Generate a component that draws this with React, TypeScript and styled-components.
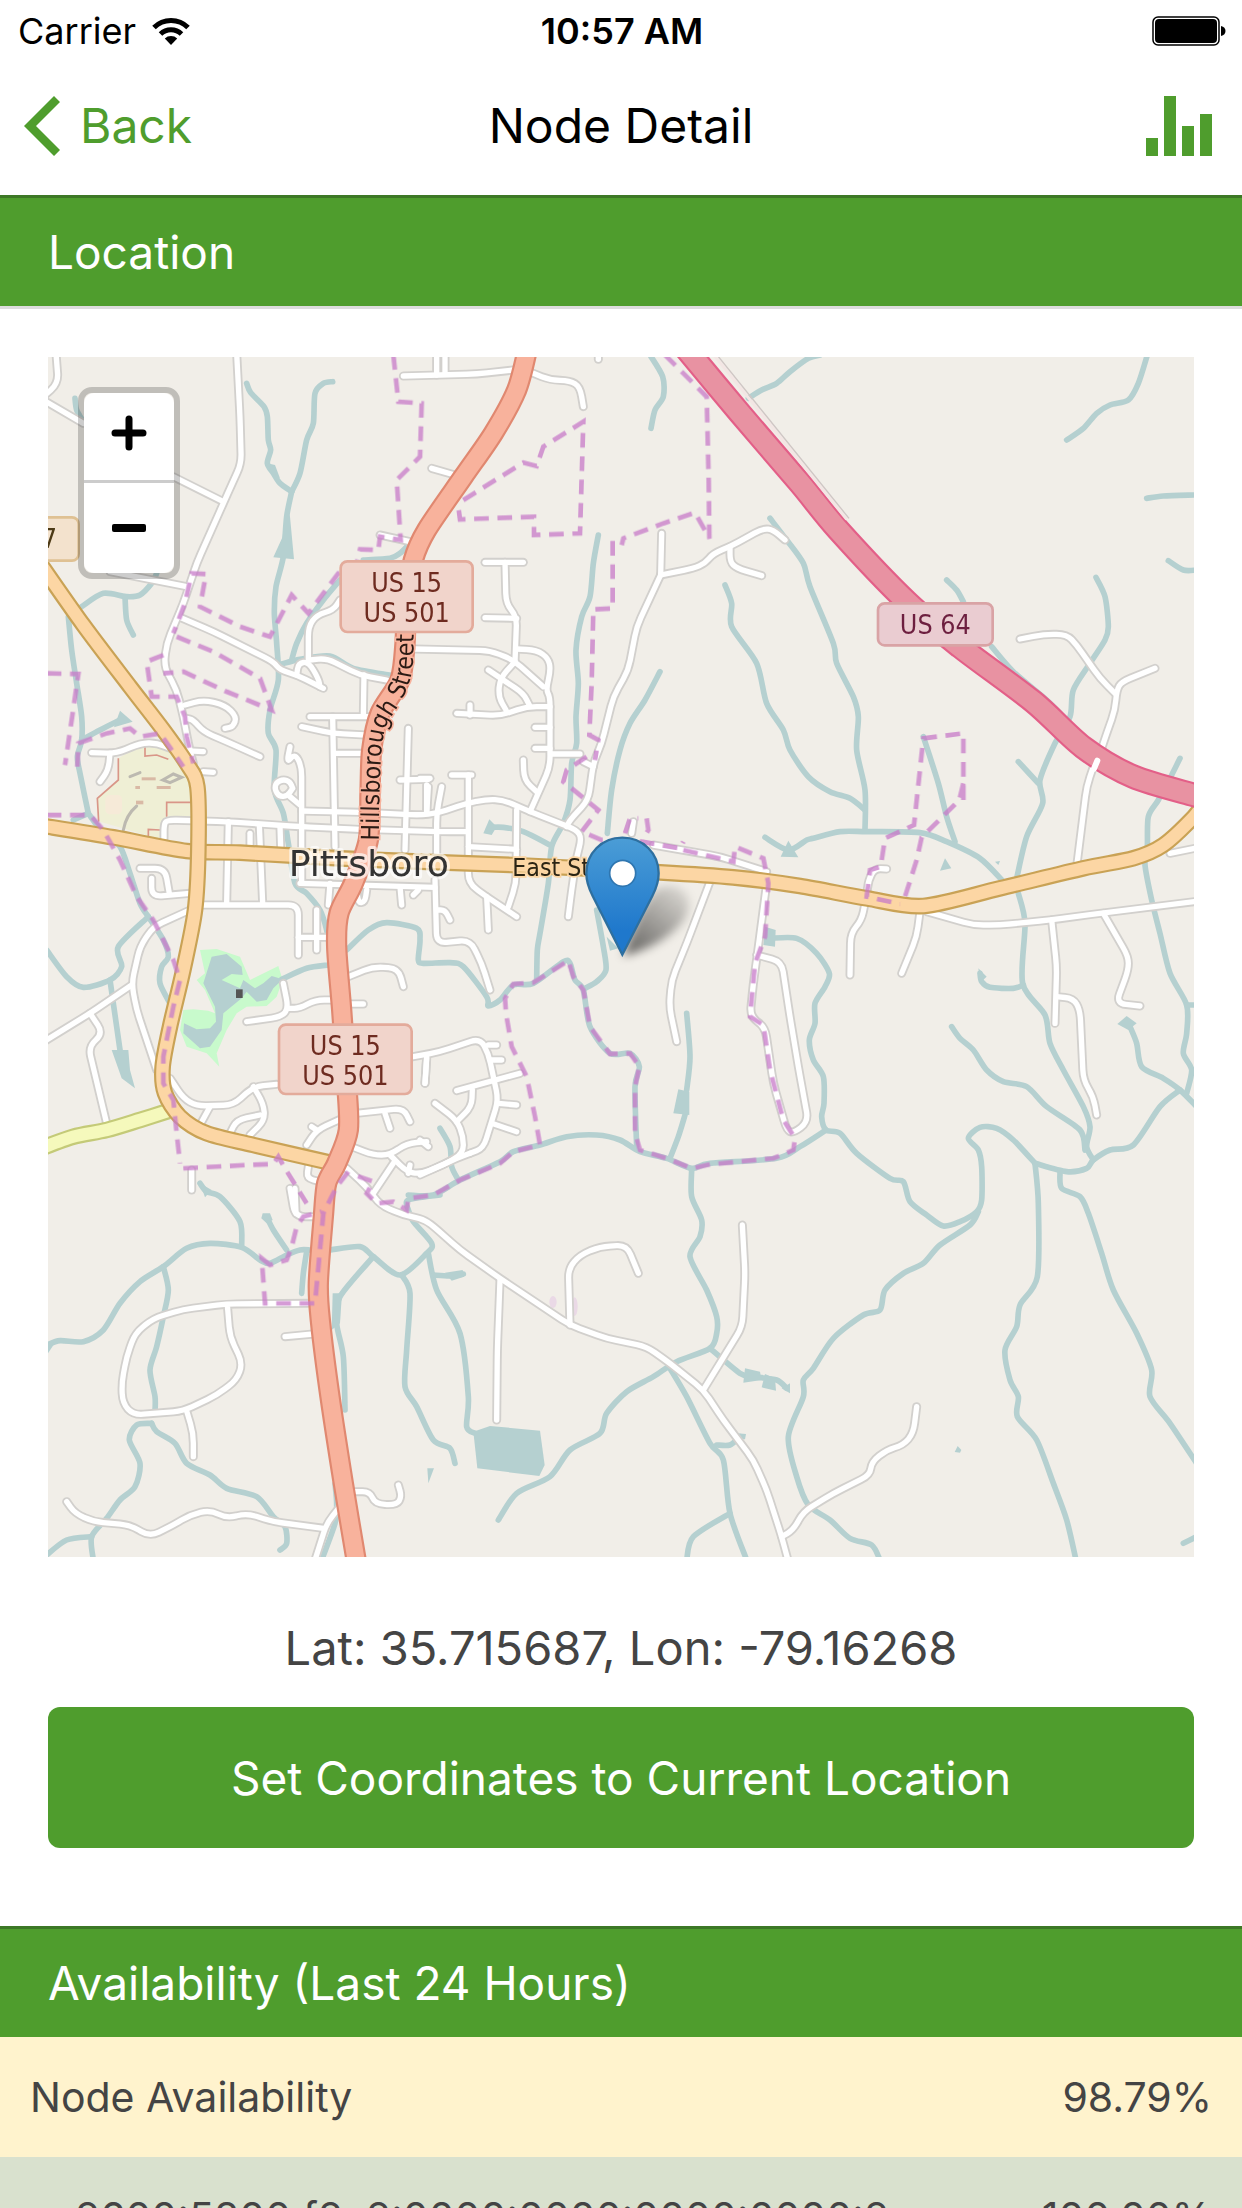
import React from "react";
import styled, { createGlobalStyle } from "styled-components";

const green = "#4f9d2d";
const greenEdge = "#3d7826";
const ink = "#444444";

const GlobalStyle = createGlobalStyle`
  * { box-sizing: border-box; }
  body {
    margin: 0;
    background: #ffffff;
    font-family: Inter, "Liberation Sans", sans-serif;
    color: #000000;
  }
  button { font: inherit; margin: 0; padding: 0; border: 0; background: none; cursor: pointer; }
`;

const Screen = styled.div`
  display: flex;
  flex-direction: column;
  height: 100vh;
  overflow: hidden;
`;

const StatusBar = styled.div`
  display: grid;
  grid-template-columns: 1fr auto 1fr;
  align-items: center;
  flex: none;
  height: 60px;
  padding: 2px 16px 0 18px;
  font-size: 36px;
`;

const Signal = styled.div`
  display: flex;
  align-items: center;
  gap: 16px;
`;

const Clock = styled.time`
  font-weight: 600;
`;

const Battery = styled.svg`
  justify-self: end;
`;

const NavBar = styled.header`
  display: grid;
  grid-template-columns: 1fr auto 1fr;
  align-items: center;
  flex: none;
  height: 135px;
  padding: 0 24px 4px;
`;

const BackButton = styled.button`
  display: flex;
  align-items: center;
  justify-self: start;
  gap: 20px;
  color: ${green};
  font-size: 48px;
`;

const NavTitle = styled.h1`
  margin: 0;
  font-size: 48px;
  font-weight: 400;
`;

const IconButton = styled.button`
  display: flex;
  justify-self: end;
  padding-right: 6px;
  color: ${green};
`;

const Content = styled.main`
  flex: 1;
  min-height: 0;
  overflow: hidden;
`;

const SectionHeader = styled.h2<{ $ruled?: boolean }>`
  display: flex;
  align-items: center;
  height: ${(p) => (p.$ruled ? 114 : 111)}px;
  margin: 0;
  padding: 0 48px;
  border-top: 3px solid ${greenEdge};
  border-bottom: ${(p) => (p.$ruled ? "3px solid #dddddd" : "0")};
  background: ${green};
  color: #ffffff;
  font-size: 46px;
  font-weight: 400;
`;

const LocationPanel = styled.section`
  padding: 48px 48px 78px;
`;

const MapFrame = styled.div`
  position: relative;
  height: 1200px;
  overflow: hidden;
  background: #f1eee8;
`;

const MapCanvas = styled.svg`
  display: block;
  width: 100%;
  height: 100%;
`;

const ZoomControl = styled.div`
  position: absolute;
  top: 30px;
  left: 30px;
  display: flex;
  flex-direction: column;
  border: 6px solid rgba(0, 0, 0, 0.2);
  border-radius: 14px;
  background-clip: padding-box;
`;

const ZoomButton = styled.button`
  display: flex;
  align-items: center;
  justify-content: center;
  width: 90px;
  height: 90px;
  background: #ffffff;

  &:first-child {
    padding-bottom: 8px;
    border-bottom: 3px solid #cccccc;
    border-radius: 10px 10px 0 0;
  }
  &:last-child {
    border-radius: 0 0 10px 10px;
  }
`;

const Coordinates = styled.p`
  margin: 62px 0 31px;
  color: ${ink};
  font-size: 47px;
  line-height: 57px;
  text-align: center;
`;

const PrimaryButton = styled.button`
  display: block;
  width: 100%;
  height: 141px;
  border-radius: 12px;
  background: ${green};
  color: #ffffff;
  font-size: 46px;
`;

const AvailabilityTable = styled.table`
  width: 100%;
  border-collapse: collapse;
  color: ${ink};
  font-size: 41px;
`;

const AvailabilityRow = styled.tr<{ $tone: "warning" | "normal" }>`
  height: 120px;
  background: ${(p) => (p.$tone === "warning" ? "#fff3cd" : "#d9e1ce")};
`;

const NameCell = styled.th<{ $nested?: boolean }>`
  padding: 0 0 0 ${(p) => (p.$nested ? 75 : 30)}px;
  font-weight: 400;
  text-align: left;
`;

const ValueCell = styled.td`
  padding: 0 30px 0 0;
  text-align: right;
`;

/* ---- Map data: the area is surveyed in a 3 x 3 grid of sheets ---- */

type Line = [col: number, row: number, points: string];

const SHEET_W = 1140;
const SHEET_H = 1200;

const streams: Line[] = [
  [0, 0, "620,100 632,128 672,170 682,200 685,270 692,300 682,340 700,370 720,400 755,425"],
  [0, 0, "878,95 850,100 825,130 820,220 800,270 780,370 755,425"],
  [0, 0, "755,425 740,500 730,620 708,710 703,790 710,880 715,990 690,1080 685,1150 708,1200 703,1320 730,1390 745,1480 765,1600 800,1630 840,1680 860,1740 870,1800"],
  [0, 0, "1110,580 1080,610 1050,625 970,630"],
  [0, 0, "900,690 850,750 800,820 770,880 755,930"],
  [0, 0, "725,942 780,928 870,918 940,955 1050,975"],
  [0, 0, "105,145 110,180 130,215"],
  [0, 0, "125,770 190,730 260,740 300,735 335,700 350,670"],
  [0, 0, "255,740 260,810 280,855"],
  [0, 0, "85,800 95,900 110,1000 125,1100 125,1170 112,1220 120,1270 145,1390"],
  [0, 0, "125,1170 180,1140 240,1110"],
  [1, 0, "690,15 728,80 730,140 705,180 693,235"],
  [1, 0, "985,145 1025,120 1070,100 1110,65 1165,25 1200,15"],
  [1, 0, "535,555 520,640 510,740 485,800 468,900 475,1000 468,1100 470,1180 455,1240 450,1350 430,1420 395,1490 385,1600 360,1750 352,1800 350,1890"],
  [1, 0, "720,965 675,1050 630,1120 600,1200 575,1320 562,1450"],
  [1, 0, "915,705 935,760 935,830 1010,940 1040,1060 1090,1140 1110,1200 1165,1280 1230,1325 1290,1345 1335,1380"],
  [1, 0, "1050,505 1100,570 1150,640 1170,710 1240,880 1250,940 1300,1040 1315,1100 1310,1200 1335,1320 1335,1440"],
  [2, 0, "1042,15 1015,100 985,150 930,165 890,190 850,235 800,270"],
  [2, 0, "1040,445 1090,438 1182,435"],
  [2, 0, "1105,632 1150,660 1190,660"],
  [2, 0, "440,690 470,720 490,755"],
  [2, 0, "575,890 640,965 740,1050 800,1110"],
  [2, 0, "888,682 915,740 925,830 915,870 870,940 820,1020 810,1100 765,1180 720,1290 728,1360 680,1460 650,1585"],
  [2, 0, "370,1160 415,1300 440,1400 465,1475"],
  [0, 1, "145,190 100,210"],
  [0, 1, "145,190 190,250 240,290 270,370 300,460 325,500"],
  [0, 1, "325,500 235,590 245,650 210,690 130,712 80,680 20,600"],
  [0, 1, "325,500 370,570 385,620 365,650 360,700 390,760"],
  [0, 1, "210,690 230,830 240,900"],
  [0, 1, "725,688 800,655 865,645"],
  [0, 1, "920,600 985,540 1040,518 1130,535 1140,570 1135,630 1150,640 1230,638 1270,650 1340,740 1345,768 1380,750 1420,705 1480,700 1570,635 1590,640 1605,690 1630,720 1650,830 1710,910 1770,910 1798,950 1785,1010 1790,1190"],
  [1, 1, "210,232 250,232 310,245 390,285"],
  [1, 1, "530,480 550,590 558,660 530,695 495,715"],
  [1, 1, "-35,1335 40,1335 120,1290 240,1235 280,1205 360,1185 440,1160 530,1155 600,1170 660,1205 740,1225 815,1255 870,1240 1070,1225 1140,1190 1218,1140"],
  [1, 1, "800,790 810,920 800,1020"],
  [1, 1, "795,1095 775,1160 750,1225"],
  [1, 1, "1035,262 1105,300 1160,270 1180,265 1260,245 1340,245 1500,248 1580,275 1680,325 1750,395"],
  [1, 1, "1050,565 1130,565 1190,610 1228,670 1215,710 1185,760 1185,820 1168,870 1180,930 1210,980 1212,1060 1205,1100 1218,1140 1260,1150 1310,1210 1410,1285 1450,1295 1470,1355 1520,1395 1570,1428 1620,1415 1670,1385 1685,1350 1685,1250 1675,1200 1645,1165 1680,1132 1730,1135 1780,1170 1845,1240"],
  [1, 1, "60,1135 90,1190 95,1250 115,1290"],
  [2, 1, "655,35 715,100"],
  [2, 1, "655,430 675,520 668,700 735,795 750,880 790,960 850,1070 870,1130 860,1190 880,1230"],
  [2, 1, "540,670 545,695 570,712 640,715 670,705"],
  [2, 1, "455,830 480,865 520,900 560,960 610,995 680,1010 740,1070 840,1140 855,1200"],
  [2, 1, "1140,25 1115,75 1075,150 1045,200 1042,290 1035,345 1055,450 1080,550 1110,670 1160,765 1160,850 1150,910 1175,960 1160,1030"],
  [2, 1, "1160,765 1190,765"],
  [2, 1, "990,830 1010,880 1025,950 1090,985 1140,1020 1190,1070"],
  [2, 1, "1140,1020 1080,1070 1000,1185 930,1200 880,1230 860,1255 800,1265 705,1240"],
  [0, 2, "480,100 500,125 540,140 600,215 605,290"],
  [0, 2, "20,585 60,572 130,575 190,540 240,460 300,395 370,350 440,295 510,280 605,292 660,330 690,340 740,315 780,300 810,300"],
  [0, 2, "680,200 700,240 740,300"],
  [0, 2, "800,305 790,370 785,430"],
  [0, 2, "370,350 385,420 370,500 350,590 330,660 345,740 345,785"],
  [0, 2, "335,820 290,825 268,870 300,940 285,1010 240,1050 200,1105 155,1160 160,1230"],
  [0, 2, "335,820 350,845 405,880 440,940 510,975 560,1015 650,1040 700,1100 735,1130 740,1180 720,1200"],
  [0, 2, "20,1215 80,1170 155,1160"],
  [0, 2, "870,300 960,290 1000,320 1080,375 1160,310 1175,280 1120,215 1105,180 1105,150 1200,135"],
  [0, 2, "1000,320 900,440 890,520 910,620 915,780"],
  [0, 2, "1085,375 1110,430 1100,600 1095,710 1130,770 1180,870 1230,895 1245,940"],
  [0, 2, "885,1000 890,1060 885,1120 845,1230"],
  [0, 2, "1165,310 1190,420 1260,550 1285,740 1280,830 1305,850"],
  [1, 2, "40,375 90,378 130,372"],
  [1, 2, "815,60 815,140 845,210 840,260 810,320 860,420 890,500 890,550 870,595 770,635 700,680 620,725 560,790 540,850 450,900 390,980 290,1030 235,1110"],
  [1, 2, "870,595 960,670 1000,680 1070,690 1100,715"],
  [1, 2, "750,655 800,740 870,880 910,930 930,1090 980,1230"],
  [1, 2, "930,1090 820,1160 800,1230"],
  [1, 2, "890,885 930,885 960,860"],
  [2, 2, "535,185 510,225 420,285 370,340 310,370 255,420 240,480 190,495 100,565 40,655 10,690 10,740 -35,860 -10,980 25,1065 90,1110 150,1165 215,1185 240,1230"],
  [2, 2, "705,40 715,160 712,380 660,465 650,530 615,600 630,690 655,740 652,800 710,870 760,1000 800,1110 828,1230"],
  [2, 2, "780,65 785,115 840,140 865,190 905,310 940,420 1010,550 1055,660 1050,740 1110,820 1190,940"],
  [2, 2, "1150,1180 1190,1160"],
];

const ponds: Line[] = [
  [0, 0, "740,470 750,500 762,628 700,622 728,560 735,500"],
  [0, 0, "682,340 705,345 720,385 698,370"],
  [0, 0, "240,1082 278,1115 222,1132"],
  [0, 1, "215,900 265,900 270,960 285,1015 245,985"],
  [1, 1, "208,208 230,230 215,255 190,250"],
  [1, 1, "775,1018 808,1025 808,1095 760,1090"],
  [1, 1, "1105,272 1135,322 1082,320"],
  [1, 1, "1035,530 1067,540 1065,590 1030,585"],
  [1, 1, "560,560 595,595 570,602"],
  [2, 1, "535,655 560,680 540,698"],
  [2, 1, "435,325 454,355 420,362"],
  [2, 1, "585,335 600,333 595,345"],
  [2, 1, "980,798 1010,820 985,840 952,822"],
  [0, 2, "668,190 690,190 698,210 680,220 664,205"],
  [0, 2, "878,430 906,430 900,520 875,540"],
  [0, 2, "24,580 45,578 24,610"],
  [0, 2, "480,100 515,120 495,142"],
  [0, 2, "1162,955 1182,955 1165,1000"],
  [1, 2, "160,845 210,828 360,842 374,945 358,978 172,955"],
  [1, 2, "75,368 128,360 132,380 95,392"],
  [1, 2, "975,655 1020,665 1025,690 970,698"],
  [1, 2, "1035,672 1065,685 1068,722 1025,712"],
  [1, 2, "1085,715 1110,700 1110,730"],
  [1, 2, "952,850 978,852 975,868 955,868"],
  [2, 2, "473,888 484,900 480,908 464,906"],
];

const streets: Line[] = [
  [0, 0, "48,10 55,100 10,140"],
  [0, 0, "10,150 130,220"],
  [0, 0, "400,380 550,455"],
  [0, 0, "590,10 600,200 604,340 550,460 470,640 430,760 380,880 372,950 410,1020 430,1100 445,1180 460,1240"],
  [0, 0, "210,665 440,710"],
  [0, 0, "415,800 520,845 700,935 720,960 770,975 850,1015"],
  [0, 0, "770,975 775,940 805,935 835,985 840,1010"],
  [0, 0, "805,930 805,830 830,795 880,780 900,750"],
  [0, 0, "810,930 860,925 960,975 1040,990"],
  [0, 0, "972,975 970,1095"],
  [0, 0, "810,1100 985,1100"],
  [0, 0, "785,1130 880,1150 975,1155"],
  [0, 0, "878,1100 885,1490"],
  [0, 0, "885,1210 970,1210"],
  [0, 0, "1125,897 1350,902 1420,930 1510,1010"],
  [0, 0, "1105,1135 1095,1500"],
  [0, 0, "1090,78 1310,72 1420,60"],
  [0, 0, "1190,10 1190,75"],
  [0, 0, "1175,355 1255,378"],
  [0, 0, "435,1065 490,1050 555,1065 590,1100 580,1130 555,1135"],
  [0, 0, "440,1105 460,1110 490,1145 560,1175 660,1220"],
  [0, 0, "155,1208 230,1210 300,1180 350,1178 400,1200 490,1205"],
  [0, 0, "210,1210 205,1260 180,1295"],
  [0, 0, "1020,555 1110,575"],
  [0, 0, "750,1190 740,1240 765,1210 785,1250 785,1600"],
  [1, 0, "75,10 75,70"],
  [1, 0, "340,70 390,90 450,92 480,110 490,170"],
  [1, 0, "535,10 535,28"],
  [1, 0, "195,637 310,637"],
  [1, 0, "255,637 258,760 290,800 285,935"],
  [1, 0, "195,803 290,805"],
  [1, 0, "290,897 350,900 385,925 392,960 378,1020 390,1040 390,1250 330,1385"],
  [1, 0, "285,935 240,985 235,1040 258,1080"],
  [1, 0, "205,960 310,1030 328,1065"],
  [1, 0, "110,1090 240,1097 320,1070 390,1070"],
  [1, 0, "150,1065 150,1095"],
  [1, 0, "345,1132 390,1132"],
  [1, 0, "345,1195 390,1195"],
  [1, 0, "395,1212 480,1212"],
  [1, 0, "725,550 722,675"],
  [1, 0, "722,675 820,655 855,640 880,610 930,590 1030,535 1060,540 1095,570"],
  [1, 0, "930,590 930,635 950,655 1025,677"],
  [1, 0, "722,675 650,830 625,960 580,1040 545,1180 520,1240 505,1350 450,1410 440,1430"],
  [1, 0, "490,1235 520,1250"],
  [2, 0, "660,867 730,853 800,853 830,885 900,985 945,1030"],
  [2, 0, "1065,955 965,995 950,1020 945,1080 920,1150 890,1240"],
  [0, 1, "758,115 750,95 730,88 708,98 704,118 718,140 742,138 758,115"],
  [0, 1, "750,140 780,165"],
  [0, 1, "490,65 520,67"],
  [0, 1, "372,265 372,225 380,210 560,215 780,230 960,238 1200,245 1280,245"],
  [0, 1, "785,183 960,187 1140,195 1190,190 1280,160 1340,148 1390,150 1470,185 1610,240 1625,265 1610,320 1595,420 1585,500"],
  [0, 1, "565,215 560,460"],
  [0, 1, "658,225 668,460"],
  [0, 1, "630,250 630,290"],
  [0, 1, "720,230 722,290"],
  [0, 1, "1080,90 1165,88"],
  [0, 1, "1160,105 1160,190"],
  [0, 1, "485,465 775,465 775,615"],
  [0, 1, "775,562 870,562"],
  [0, 1, "830,480 830,600"],
  [0, 1, "300,355 375,355 388,430"],
  [0, 1, "335,385 335,440 450,430"],
  [0, 1, "450,480 340,530 300,590 275,700 290,780 350,960"],
  [0, 1, "10,876 150,790 275,705"],
  [0, 1, "150,790 190,850 145,890 200,1120"],
  [0, 1, "390,985 430,1045 470,1068 580,1065 640,1010 710,1003"],
  [0, 1, "640,1010 670,1060 675,1110 630,1155"],
  [0, 1, "570,1150 590,1110 660,1095"],
  [0, 1, "510,1070 480,1125"],
  [0, 1, "730,700 745,775 725,800 620,815"],
  [0, 1, "745,775 780,775 825,750 880,750"],
  [0, 1, "925,762 970,762"],
  [0, 1, "925,680 1000,650 1075,655 1090,710"],
  [0, 1, "780,400 1185,412"],
  [0, 1, "870,400 865,465"],
  [0, 1, "950,415 955,460 975,455 980,420"],
  [0, 1, "1080,410 1085,465"],
  [0, 1, "1120,435 1135,420"],
  [0, 1, "1185,390 1190,580 1290,570 1325,640 1350,720"],
  [0, 1, "950,1090 1090,1075 1110,1115"],
  [0, 1, "1035,1090 1050,1135"],
  [0, 1, "1120,920 1200,905 1320,865 1345,910 1375,1050 1330,1195 1290,1210"],
  [0, 1, "1160,920 1155,1000"],
  [0, 1, "900,1108 830,1140 800,1185"],
  [0, 1, "815,1130 830,1140"],
  [0, 1, "935,1190 1000,1215 1050,1215 1100,1180 1160,1175"],
  [0, 1, "1050,1215 1100,1265 1140,1272 1210,1245 1270,1210 1270,1160 1250,1110 1185,1060"],
  [1, 1, "25,110 20,190"],
  [1, 1, "65,110 50,190 50,320"],
  [1, 1, "0,85 30,85"],
  [1, 1, "95,75 155,75"],
  [1, 1, "145,75 145,400 200,440 290,500"],
  [1, 1, "145,290 290,298"],
  [1, 1, "290,180 288,400 265,470"],
  [1, 1, "200,440 205,540"],
  [1, 1, "310,30 312,90 350,125"],
  [1, 1, "50,480 75,480 90,510"],
  [1, 1, "635,250 640,215"],
  [1, 1, "700,285 900,320 1040,365"],
  [1, 1, "1040,400 1015,590 1000,700 990,800 1035,830 1060,1000 1100,1140 1120,1150 1165,1115 1135,950 1110,800 1085,635 1010,615"],
  [1, 1, "870,395 800,580 755,690 748,770 770,875"],
  [1, 1, "205,885 230,885"],
  [1, 1, "215,930 245,930"],
  [1, 1, "110,1022 300,970"],
  [1, 1, "157,1020 155,1070 110,1115"],
  [1, 1, "235,1060 290,1065"],
  [1, 1, "215,1120 290,1145"],
  [1, 1, "150,1210 110,1225 0,1275"],
  [1, 1, "20,925 15,1000"],
  [1, 1, "0,1170 25,1190"],
  [2, 1, "890,20 860,110 845,230 830,350"],
  [2, 1, "380,485 520,525 600,525 750,510 900,490 1190,454"],
  [2, 1, "1110,310 1190,294"],
  [2, 1, "195,460 185,510 152,550 150,675"],
  [2, 1, "360,485 350,560 305,670"],
  [2, 1, "755,510 770,650 765,820"],
  [2, 1, "770,740 820,745 840,780 850,990 880,1040 890,1095"],
  [2, 1, "910,490 985,620 985,660 948,760 1020,768"],
  [2, 1, "260,357 225,355 205,390 200,440"],
  [0, 2, "455,60 455,120"],
  [0, 2, "750,115 765,200 830,200"],
  [0, 2, "765,115 768,190"],
  [0, 2, "805,50 800,85 840,95"],
  [0, 2, "1060,40 1000,130"],
  [0, 2, "1110,45 1105,70"],
  [0, 2, "920,55 980,110 1020,165 1090,195 1140,205 1170,220 1260,300 1380,385 1590,525 1700,565 1820,590 1890,640 1990,720 2050,810 2140,930 2180,1020 2225,1160 2245,1235"],
  [0, 2, "810,460 560,462 430,478 340,505 285,550 260,620 245,700 248,760 280,795 430,783 530,735 590,690 608,640 570,560 562,465"],
  [0, 2, "440,783 460,850 460,920"],
  [0, 2, "735,560 820,552"],
  [0, 2, "80,1055 105,1090 160,1115 270,1125 330,1160 400,1125 450,1095 510,1080 560,1105 620,1090 700,1115 850,1135"],
  [0, 2, "900,1070 860,1120 825,1230"],
  [0, 2, "945,1025 990,1025 1005,1062 1070,1065 1085,1040 1075,1005"],
  [1, 2, "240,390 232,600 230,810"],
  [1, 2, "450,525 445,355 480,315 540,290 620,285 655,370"],
  [1, 2, "967,225 975,370 967,530 850,720"],
  [1, 2, "1085,1160 1120,1140 1150,1085 1240,1030 1350,975 1355,935 1400,900 1450,885 1480,850 1490,770"],
];

const townLimits: Line[] = [
  [0, 0, "1060,15 1075,155 1145,160 1140,320 1070,390 1082,570 1020,560 1015,600 960,598 950,640 895,670 805,790 755,735 690,860 600,830 480,770 498,672 455,670 435,760 400,850"],
  [0, 0, "410,860 520,905 660,985 695,1080 560,1025 430,965 370,970"],
  [0, 0, "370,915 320,935 335,1040 410,1040 435,1100 440,1160 460,1240"],
  [0, 0, "20,970 115,972 95,1110 75,1245"],
  [0, 0, "112,1250 115,1180 200,1150 270,1135 300,1160 360,1150 430,1250"],
  [1, 0, "735,15 860,140 866,390 868,565 825,488 730,520 610,565 605,585"],
  [1, 0, "578,573 578,775 520,778 515,1000 508,1155 535,1170 525,1230"],
  [1, 0, "130,450 310,338 350,348 370,290 490,215 480,550 342,555 342,500 120,508 115,470"],
  [2, 0, "490,1350 490,1150 370,1165 342,1425 255,1465 242,1550 210,1560 200,1640 300,1662"],
  [2, 1, "490,100 478,150 365,262 350,330 315,440"],
  [0, 1, "20,195 150,195 190,240 240,330 290,440 340,510 400,630 420,690 400,770 370,920 370,1000 400,1050 410,1150 420,1240"],
  [1, 1, "500,20 440,60 430,95 535,180 485,245 545,270 610,272"],
  [1, 1, "615,250 630,205 655,205"],
  [1, 1, "680,205 685,240 665,275 780,295 790,275"],
  [1, 1, "790,300 940,335 945,290 1030,325 1045,400 1035,560 1005,640 990,800 1030,825 1050,960 1090,1110 1125,1165 1120,1200 1060,1225 870,1243 815,1255 740,1225 660,1200 645,1150 645,1010 658,950 630,910 570,912 510,830 490,720 460,680 445,632 340,698 280,702 255,745 258,790 275,890 320,980 345,1100 360,1185 280,1205 240,1240 120,1290 40,1335 -35,1345 -40,1380 -80,1355 -130,1360 -160,1330 -140,1295 -210,1270"],
  [0, 2, "430,55 620,45 700,42 715,20 735,55 800,160"],
  [0, 2, "925,65 890,110 850,190 825,460 675,460 665,325 690,345 740,330 755,290 770,230 790,200 845,185"],
];

const red = "1462,0 1430,120 1360,250 1270,380 1160,540 1120,630 1100,750 1095,880 1080,990 1020,1090 995,1200 990,1330 985,1470 940,1600 897,1690 890,1790 905,1980 920,2200 925,2340 890,2440 860,2500 850,2600 835,2800 842,2920 870,3140 910,3400 950,3640";
const orangeBypass = "0,640 130,825 270,1010 370,1140 440,1240 472,1310 475,1500 465,1680 430,1860 390,2030 368,2150 375,2230 420,2300 500,2350 640,2385 870,2438";
const orangeStreet = "0,1426 220,1462 440,1503 600,1508 900,1525 1140,1535 1417,1545 1860,1567 2080,1582 2280,1608 2480,1645 2650,1668 2880,1615 3130,1555 3280,1525 3370,1485 3462,1400 3490,1360";
const pink = "1935,-8 2100,190 2280,400 2395,540 2600,755 2760,890 2980,1055 3130,1192 3280,1280 3462,1335 3500,1345";
const yellow = "0,2396 100,2360 200,2340 300,2310 385,2283";

function toPoints(text: string) {
  return text.split(" ").map((pair) => pair.split(",").map(Number));
}

/* Catmull-Rom spline through every surveyed point. */
function curve(text: string) {
  const p = toPoints(text);
  let d = `M${p[0][0]} ${p[0][1]}`;
  for (let i = 0; i < p.length - 1; i++) {
    const a = p[i - 1] || p[i];
    const b = p[i];
    const c = p[i + 1];
    const e = p[i + 2] || c;
    d += `C${b[0] + (c[0] - a[0]) / 7} ${b[1] + (c[1] - a[1]) / 7} ${c[0] - (e[0] - b[0]) / 7} ${c[1] - (e[1] - b[1]) / 7} ${c[0]} ${c[1]}`;
  }
  return d;
}

/* Straight runs with softened bends. */
function bend(text: string, radius = 30) {
  const p = toPoints(text);
  let d = `M${p[0][0]} ${p[0][1]}`;
  for (let i = 1; i < p.length - 1; i++) {
    const toward = (q: number[]) => {
      const dx = q[0] - p[i][0];
      const dy = q[1] - p[i][1];
      const length = Math.hypot(dx, dy);
      const t = Math.min(radius, length / 2) / length;
      return `${p[i][0] + dx * t} ${p[i][1] + dy * t}`;
    };
    d += `L${toward(p[i - 1])}Q${p[i][0]} ${p[i][1]} ${toward(p[i + 1])}`;
  }
  const last = p[p.length - 1];
  return `${d}L${last[0]} ${last[1]}`;
}

function sheetOffset(col: number, row: number) {
  return `translate(${col * SHEET_W} ${row * SHEET_H})`;
}

interface LayerProps {
  lines: Line[];
  shape: (text: string) => string;
  color: string;
  width: number;
}

function LineLayer({ lines, shape, color, width }: LayerProps) {
  return (
    <g fill="none" stroke={color} strokeWidth={width} strokeLinecap="round" strokeLinejoin="round">
      {lines.map(([c, r, pts]) => (
        <path key={pts} transform={sheetOffset(c, r)} d={shape(pts)} />
      ))}
    </g>
  );
}

function Highway({ points, fill, edge, width }: { points: string; fill: string; edge: string; width: number }) {
  const d = curve(points);
  return (
    <g fill="none">
      <path d={d} stroke={edge} strokeWidth={width} />
      <path d={d} stroke={fill} strokeWidth={width - 13} />
    </g>
  );
}

interface ShieldProps {
  x: number;
  y: number;
  width: number;
  height: number;
  fill: string;
  edge: string;
  ink: string;
  lines: string[];
}

function Shield({ x, y, width, height, fill, edge, ink: color, lines }: ShieldProps) {
  return (
    <g>
      <rect x={x} y={y} width={width} height={height} rx="20" fill={fill} stroke={edge} strokeWidth="8" />
      <MapLabel x={x + width / 2} textAnchor="middle" fill={color} fontSize="80">
        {lines.map((line, i) => (
          <tspan key={line} x={x + width / 2} y={y + 92 + i * 90}>
            {line}
          </tspan>
        ))}
      </MapLabel>
    </g>
  );
}

const MapLabel = styled.text`
  font-family: "DejaVu Sans Condensed", "Noto Sans", sans-serif;
`;

const TownLabel = styled.text`
  font-family: "DejaVu Sans", sans-serif;
`;

function TownMap() {
  return (
    <MapCanvas viewBox="24 21 3438 3600" preserveAspectRatio="xMidYMid slice" role="img" aria-label="Map of Pittsboro">
      <defs>
        <linearGradient id="pinFill" x1="0" y1="0" x2="0" y2="1">
          <stop offset="0" stopColor="#4b9dd6" />
          <stop offset="0.8" stopColor="#1f78cc" />
          <stop offset="1" stopColor="#1f78cc" />
        </linearGradient>
        <linearGradient id="shadowFill" x1="0" y1="1" x2="0.75" y2="0">
          <stop offset="0" stopColor="#000000" stopOpacity="0.6" />
          <stop offset="1" stopColor="#000000" stopOpacity="0.12" />
        </linearGradient>
        <filter id="shadowBlur" x="-30%" y="-30%" width="160%" height="160%">
          <feGaussianBlur stdDeviation="14" />
        </filter>
        <path id="hillsboroughLine" d="M1016 1472C1018 1350 1018 1300 1024 1210S1045 1120 1085 1050S1118 930 1122 835" />
      </defs>

      <rect x="0" y="0" width="3500" height="3660" fill="#f1eee8" />

      <g transform={sheetOffset(0, 1)}>
        <polygon fill="#efefd5" points="235,25 235,90 172,145 180,215 370,270 375,210 450,210 450,90 385,-5 310,-18" />
        <g fill="none" stroke="#d99688" strokeWidth="5">
          <polyline points="235,25 235,90 172,145 176,215" />
          <polyline points="380,200 380,157 455,157" />
          <polyline points="315,-12 315,18 350,15 385,28" />
          <polyline points="325,260 325,238 360,240" />
        </g>
        <g fill="none" stroke="#bcb9b0" strokeWidth="9" strokeLinecap="round">
          <path d="M250 240Q258 195 290 168" />
          <path d="M270 80L300 68M368 90L400 72L425 82L390 98Z" />
        </g>
        <g fill="#d9b9a5">
          <rect x="305" y="82" width="42" height="9" />
          <rect x="350" y="108" width="42" height="9" />
          <rect x="286" y="108" width="14" height="9" />
          <rect x="288" y="152" width="22" height="11" />
        </g>
        <rect x="196" y="135" width="50" height="58" rx="14" fill="#f6ead8" />
        <polygon
          fill="#c8facc"
          points="480,600 530,597 600,620 630,690 715,648 728,690 710,740 680,768 620,770 590,790 560,840 530,910 538,950 500,910 440,890 420,840 430,780 460,778 505,782 525,790 495,720 470,690 495,670"
        />
        <polygon
          fill="#b5d0d0"
          points="515,620 560,612 605,650 608,675 575,672 545,690 600,715 610,690 645,715 670,700 695,678 728,688 700,715 680,750 650,755 620,725 605,745 550,790 545,840 510,890 480,895 430,850 432,820 470,838 510,835 528,815 525,770 490,700"
        />
        <rect x="588" y="718" width="20" height="26" fill="#555555" />
      </g>
      <g fill="#ead9e6">
        <ellipse cx="1539" cy="2856" rx="11" ry="18" />
        <ellipse cx="1604" cy="2870" rx="9" ry="28" />
      </g>

      <LineLayer lines={streams} shape={curve} color="#b5d0d0" width={17} />
      <g fill="#b5d0d0">
        {ponds.map(([c, r, pts]) => (
          <polygon key={pts} transform={sheetOffset(c, r)} points={pts} />
        ))}
      </g>

      <LineLayer lines={streets} shape={bend} color="#d2d0cd" width={27} />
      <LineLayer lines={streets} shape={bend} color="#ffffff" width={16} />

      <Highway points={yellow} fill="#f5f9bc" edge="#c4ca78" width={50} />
      <Highway points={orangeStreet} fill="#fcd6a4" edge="#c9a255" width={50} />
      <Highway points={orangeBypass} fill="#fcd6a4" edge="#c9a255" width={50} />
      <Highway points={red} fill="#f8b29c" edge="#e08870" width={64} />
      <Highway points={pink} fill="#e892a2" edge="#e35f88" width={74} />
      <path d="M2016 8L2420 508" stroke="#f3e6e4" strokeWidth="9" />
      <path d="M2024 6L2427 505" stroke="#cfc6c4" strokeWidth="4" />
      <path d="M3172 1232L3162 1256" stroke="#ffffff" strokeWidth="18" strokeLinecap="round" />

      <g fill="none" stroke="#c77ac9" strokeWidth="14" strokeDasharray="44 26" opacity="0.75">
        {townLimits.map(([c, r, pts]) => (
          <polyline key={pts} transform={sheetOffset(c, r)} points={pts} />
        ))}
      </g>

      <MapLabel fill="#2b1a14" fontSize="74" stroke="#f8b29c" strokeWidth="10" paintOrder="stroke">
        <textPath href="#hillsboroughLine">Hillsborough Street</textPath>
      </MapLabel>
      <MapLabel x="1417" y="1578" fill="#2b2414" fontSize="74" stroke="#fcd6a4" strokeWidth="10" paintOrder="stroke">
        East St
      </MapLabel>
      <TownLabel
        x="746"
        y="1577"
        fill="#333333"
        fontSize="109"
        stroke="#ffffff"
        strokeOpacity="0.65"
        strokeWidth="18"
        strokeLinejoin="round"
        paintOrder="stroke"
      >
        Pittsboro
      </TownLabel>

      <Shield x={-60} y={502} width={176} height={130} fill="#f3e2cd" edge="#dfc193" ink="#4c3a16" lines={["7"]} />
      <Shield x={902} y={634} width={396} height={212} fill="#f1d4cb" edge="#e3ab9b" ink="#6e2b20" lines={["US 15", "US 501"]} />
      <Shield x={717} y={2024} width={398} height={208} fill="#f1d4cb" edge="#e3ab9b" ink="#6e2b20" lines={["US 15", "US 501"]} />
      <Shield x={2514} y={760} width={344} height={126} fill="#eaccd1" edge="#d9a3a5" ink="#6d1f3f" lines={["US 64"]} />

      <g transform={sheetOffset(1, 1)}>
        <path
          d="M610 618C640 530 670 450 715 415C780 390 830 440 795 505C760 560 680 602 610 618Z"
          fill="url(#shadowFill)"
          filter="url(#shadowBlur)"
        />
        <path
          d="M607 263C545 263 499 310 499 370C499 395 506 415 518 438L607 614L697 438C709 415 716 395 716 370C716 310 669 263 607 263Z"
          fill="url(#pinFill)"
          stroke="#2e6f9f"
          strokeWidth="7"
        />
        <circle cx="608" cy="370" r="39" fill="#ffffff" stroke="#2f76b0" strokeWidth="5" />
      </g>
    </MapCanvas>
  );
}

const availability = [
  { name: "Node Availability", value: "98.79%", tone: "warning" as const, nested: false },
  { name: "2600:5800:f2a2:0000:0000:0000:0000:2", value: "100.00%", tone: "normal" as const, nested: true },
];

export default function App() {
  return (
    <>
      <GlobalStyle />
      <Screen>
        <StatusBar>
          <Signal>
            <span>Carrier</span>
            <svg width="38" height="28" viewBox="0 0 38 28" aria-hidden="true">
              <g fill="none" stroke="#000000" strokeWidth="5">
                <path d="M2 10.500A24 24 0 0 1 36 10.500" />
                <path d="M8.500 17A15 15 0 0 1 29.500 17" />
              </g>
              <path d="M19 28L12.800 21.500A9 9 0 0 1 25.200 21.500Z" fill="#000000" />
            </svg>
          </Signal>
          <Clock>10:57 AM</Clock>
          <Battery width="74" height="30" viewBox="0 0 74 30" aria-hidden="true">
            <rect x="1" y="1" width="66" height="28" rx="5" fill="none" stroke="#000000" strokeWidth="1.500" />
            <rect x="3" y="3" width="62" height="24" rx="4" />
            <path d="M69 10Q73.500 11 73.500 15T69 20Z" />
          </Battery>
        </StatusBar>

        <NavBar>
          <BackButton type="button">
            <svg width="36" height="60" viewBox="0 0 36 60" aria-hidden="true">
              <path d="M30 0L0 30L30 60L36 54L12 30L36 6Z" fill="currentColor" />
            </svg>
            Back
          </BackButton>
          <NavTitle>Node Detail</NavTitle>
          <IconButton type="button" aria-label="Charts">
            <svg width="66" height="60" viewBox="0 0 66 60" fill="currentColor" aria-hidden="true">
              <rect x="0" y="42" width="12" height="18" />
              <rect x="18" y="0" width="12" height="60" />
              <rect x="36" y="30" width="12" height="30" />
              <rect x="54" y="18" width="12" height="42" />
            </svg>
          </IconButton>
        </NavBar>

        <Content>
          <SectionHeader $ruled>Location</SectionHeader>
          <LocationPanel>
            <MapFrame>
              <TownMap />
              <ZoomControl>
                <ZoomButton type="button" aria-label="Zoom in">
                  <svg width="36" height="36" viewBox="0 0 36 36" aria-hidden="true">
                    <path d="M18 4V32M4 18H32" stroke="#000000" strokeWidth="7" strokeLinecap="round" />
                  </svg>
                </ZoomButton>
                <ZoomButton type="button" aria-label="Zoom out">
                  <svg width="34" height="10" viewBox="0 0 34 10" aria-hidden="true">
                    <rect x="0" y="1" width="34" height="8" rx="2" />
                  </svg>
                </ZoomButton>
              </ZoomControl>
            </MapFrame>
            <Coordinates>Lat: 35.715687, Lon: -79.16268</Coordinates>
            <PrimaryButton type="button">Set Coordinates to Current Location</PrimaryButton>
          </LocationPanel>

          <SectionHeader>Availability (Last 24 Hours)</SectionHeader>
          <AvailabilityTable>
            <tbody>
              {availability.map((row) => (
                <AvailabilityRow key={row.name} $tone={row.tone}>
                  <NameCell scope="row" $nested={row.nested}>
                    {row.name}
                  </NameCell>
                  <ValueCell>{row.value}</ValueCell>
                </AvailabilityRow>
              ))}
            </tbody>
          </AvailabilityTable>
        </Content>
      </Screen>
    </>
  );
}
